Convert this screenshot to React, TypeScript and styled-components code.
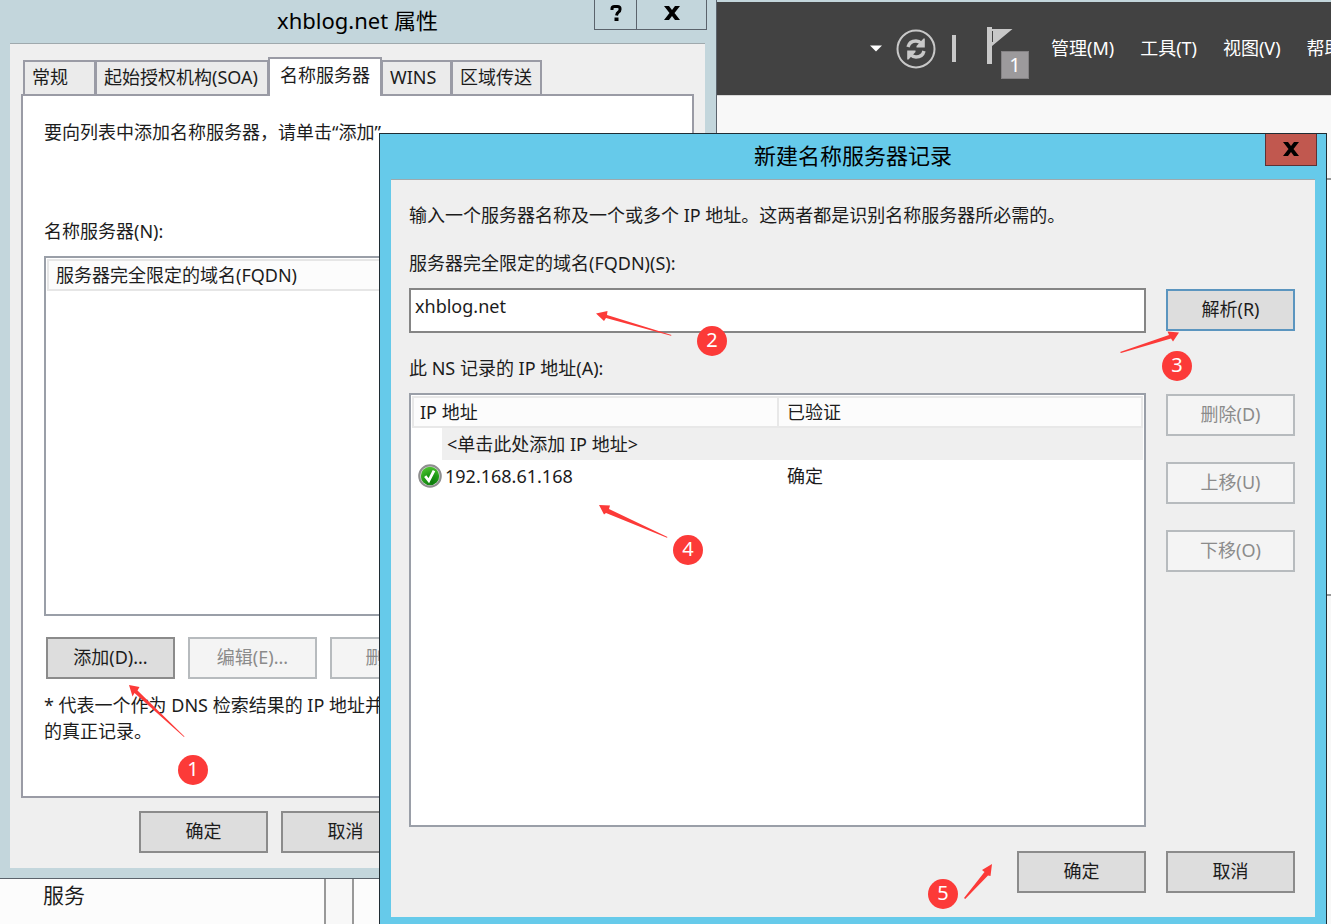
import React from "react";
import styled, { createGlobalStyle, css } from "styled-components";

const GlobalStyle = createGlobalStyle`
  *, *::before, *::after { box-sizing: border-box; }
  body { margin: 0; }
  body, button, input, table {
    font-family: "Noto Sans", "Noto Sans CJK SC", sans-serif;
    font-size: 18px;
    line-height: 26px;
    color: #1c1c1c;
  }
  p { margin: 0; }
`;

const Desktop = styled.div`
  position: relative;
  display: flex;
  flex-direction: column;
  min-height: 100vh;
  overflow: hidden;
  background: #f8f8f8;
`;

/* ---------- Server console behind the dialogs ---------- */

const ConsoleHeader = styled.header`
  display: flex;
  justify-content: flex-end;
  align-items: center;
  height: 95px;
  border-top: 2px solid #c3d6dc;
  background: #424242;
`;

const HeaderTools = styled.div`
  display: flex;
  align-items: center;
  flex: none;
  margin-right: 22px;
`;

const IconButton = styled.button`
  display: block;
  padding: 0;
  border: 0;
  background: none;
  svg { display: block; }
`;

const CaretButton = styled(IconButton)`
  margin-right: 14px;
`;

const FlagButton = styled(IconButton)`
  position: relative;
  margin-top: 8px;
`;

const HeaderDivider = styled.span`
  width: 4px;
  height: 27px;
  margin: 0 31px 0 16px;
  background: #c8c8c8;
`;

const FlagBadge = styled.span`
  position: absolute;
  left: 14px;
  top: 24px;
  width: 28px;
  height: 28px;
  border: 1px solid #848284;
  background: #9c9a9c;
  color: #fff;
  font-size: 20px;
  line-height: 26px;
  text-align: center;
`;

const MenuBar = styled.nav`
  display: flex;
  flex: none;
  gap: 26px;
  width: 280px;
  padding-bottom: 2px;
  overflow: hidden;
`;

const MenuItem = styled.button`
  flex: none;
  padding: 0;
  border: 0;
  background: none;
  color: #fff;
  white-space: nowrap;
`;

const ConsoleBody = styled.div`
  display: flex;
  flex: 1;
  gap: 26px;
  border-top: 1px solid #d8d8d8;
`;

const SideTile = styled.section`
  width: 326px;
  padding: 786px 0 0 43px;
  border-right: 2px solid #999;
  background: #fcfcfc;
  font-size: 21px;
`;

const MiddleTile = styled.section`
  width: 300px;
  border-left: 2px solid #999;
  background: #fcfcfc;
`;

const WideTile = styled.section`
  flex: 1;
  height: 418px;
  margin-top: 82px;
  border: solid #999;
  border-width: 2px 0;
  background: #fff;
`;

/* ---------- Windows ---------- */

const PropertiesWindow = styled.section`
  position: absolute;
  left: 0;
  top: 0;
  width: 717px;
  padding: 0 11px 10px 10px;
  border: solid #5b636c;
  border-width: 0 1px 1px 0;
  background: #c3d6dc;
`;

const RecordWindow = styled.section`
  position: absolute;
  left: 379px;
  right: 4px;
  top: 133px;
  bottom: 0;
  display: flex;
  flex-direction: column;
  padding: 0 11px 7px;
  border: solid #1f2c33;
  border-width: 1px 1px 0;
  background: #66caea;
`;

const TitleBar = styled.header<{ $height: number }>`
  position: relative;
  display: flex;
  align-items: center;
  justify-content: center;
  height: ${(p) => p.$height}px;
  padding-bottom: 3px;
`;

const Title = styled.h1`
  margin: 0;
  font-size: 22px;
  line-height: 30px;
  font-weight: 400;
  color: #000;
`;

const CaptionButtons = styled.div`
  position: absolute;
  right: -2px;
  top: 0;
  display: flex;
`;

const CaptionButton = styled.button<{ $width: number; $danger?: boolean }>`
  display: flex;
  align-items: center;
  justify-content: center;
  width: ${(p) => p.$width}px;
  height: ${(p) => (p.$danger ? 32 : 30)}px;
  padding: 0 0 ${(p) => (p.$danger ? 2 : 4)}px;
  border: 1px solid ${(p) => (p.$danger ? "#5c3236" : "#5b636c")};
  border-top: 0;
  background: ${(p) => (p.$danger ? "#c1584f" : "transparent")};
  & + & { margin-left: -1px; }
`;

const Client = styled.div`
  flex: 1;
  display: flex;
  flex-direction: column;
  border-top: 1px solid #9fa9ad;
  background: #efefef;
`;

const PushButton = styled.button<{ $focused?: boolean }>`
  flex: none;
  width: 129px;
  height: 42px;
  padding: 0 0 2px;
  border: 2px solid ${(p) => (p.$focused ? "#5b95bf" : "#8b8b8b")};
  background: #dddddd;
  &:disabled {
    border-color: #b7bbbe;
    background: #f4f4f4;
    color: #8b8b8b;
  }
`;

const ButtonRow = styled.div<{ $gap: number }>`
  display: flex;
  gap: ${(p) => p.$gap}px;
`;

/* ---------- Properties window ---------- */

const PropertiesClient = styled(Client)`
  padding: 13px 11px 15px;
`;

const TabStrip = styled.div`
  display: flex;
  align-items: flex-end;
  padding-left: 2px;
`;

const Tab = styled.button<{ $width: number; $active?: boolean }>`
  width: ${(p) => p.$width}px;
  height: 34px;
  padding: 0 0 2px 7px;
  border: solid #9a9ba5;
  border-width: 2px 2px 0;
  background: #ebebeb;
  text-align: left;
  white-space: nowrap;
  & + & { margin-left: -1px; }
  ${(p) =>
    p.$active &&
    css`
      position: relative;
      height: 39px;
      margin-bottom: -2px;
      padding: 0 0 6px 10px;
      background: #fff;
    `}
`;

const TabPanel = styled.div`
  height: 704px;
  padding: 23px 20px 0 21px;
  border: 2px solid #9a9ba5;
  background: #fff;
`;

const ServerListLabel = styled.p`
  margin: 73px 0 12px;
`;

const ServerList = styled.table`
  display: block;
  width: 100%;
  height: 360px;
  padding: 1px;
  margin-bottom: 21px;
  border: 2px solid #9a9fa8;
  border-spacing: 0;
  th {
    width: 622px;
    height: 32px;
    padding: 0 0 0 7px;
    border: 2px solid #e6e6e6;
    background: #fcfcfc;
    font-weight: 400;
    text-align: left;
  }
`;

const ServerActions = styled(ButtonRow)`
  padding-left: 2px;
`;

const Note = styled.p`
  margin-top: 13px;
`;

const PropertiesFooter = styled(ButtonRow)`
  margin: 13px 0 0 118px;
`;

/* ---------- New record window ---------- */

const RecordClient = styled(Client)`
  padding: 22px 20px 24px 18px;
`;

const FieldLabel = styled.label<{ $bottom: number }>`
  margin: 22px 0 ${(p) => p.$bottom}px;
`;

const FieldRow = styled.div`
  display: flex;
  gap: 20px;
`;

const NameInput = styled.input`
  flex: 1;
  min-width: 0;
  height: 45px;
  padding: 0 4px 9px;
  border: 2px solid #858585;
  border-radius: 0;
  background: #fff;
  outline: 0;
`;

const SideButtons = styled.div`
  display: flex;
  flex-direction: column;
  gap: 26px;
  padding-top: 1px;
`;

const ListBox = styled.div`
  flex: 1;
  height: 434px;
  padding: 1px;
  border: 2px solid #9a9fa8;
  background: #fff;
`;

const AddressTable = styled.table`
  width: 100%;
  border-spacing: 0;
  table-layout: fixed;
  th, td {
    height: 32px;
    padding: 0 0 0 8px;
    text-align: left;
    font-weight: 400;
  }
  th {
    padding-left: 6px;
    border: 2px solid #e8e8e8;
    background: #fcfcfc;
  }
  th + th { border-left-width: 0; padding-left: 8px; }
  col:first-child { width: 30px; }
  col:nth-child(2) { width: 337px; }
`;

const AddRow = styled.tr`
  td + td { background: #efefef; padding-left: 5px; }
`;

const AddressRow = styled.tr`
  td:first-child { padding-left: 6px; }
  td:nth-child(2) { padding-left: 3px; }
  svg { display: block; }
`;

const RecordFooter = styled(ButtonRow)`
  justify-content: flex-end;
  margin-top: 24px;
`;

/* ---------- Step markers ---------- */

const StepBadge = styled.span<{ $x: number; $y: number }>`
  position: absolute;
  left: ${(p) => p.$x}px;
  top: ${(p) => p.$y}px;
  width: 30px;
  height: 30px;
  border-radius: 50%;
  background: #fc3a38;
  color: #fff;
  font-size: 20px;
  line-height: 28px;
  text-align: center;
`;

const Arrows = styled.svg`
  position: absolute;
  left: 0;
  top: 0;
  pointer-events: none;
`;

const steps = [
  { n: 1, x: 178, y: 755 },
  { n: 2, x: 697, y: 326 },
  { n: 3, x: 1162, y: 351 },
  { n: 4, x: 673, y: 535 },
  { n: 5, x: 928, y: 879 },
];

const arrows = [
  "129,685 139.5,687 137.5,690.5 184.5,736.5 184,737 134.5,693 132.5,696.5",
  "596,313.5 607.5,311 607,315 671.5,335 671,335.8 606,318 604,321",
  "1179,332.5 1167.5,331.5 1169,335 1120,352 1121,353 1171,338.5 1173,341.5",
  "599,505 610,505.5 609,509 667.5,537 667,537.8 606,513 604,514.5",
  "992,864 982,870 984.5,872 964,898 965.2,899 988,875.5 990.5,876",
];

const CloseGlyph = () => (
  <svg width="18" height="14" viewBox="0 0 18 14" aria-hidden="true">
    <path d="M1 0H6L9 4L12 0H17L11.5 7L17 14H12L9 10L6 14H1L6.5 7Z" fill="#000" />
  </svg>
);

const HelpGlyph = () => (
  <svg width="12" height="16" viewBox="0 0 12 16" aria-hidden="true">
    <path
      d="M2 5V3.5Q2 1.5 4.5 1.5H7.5Q10 1.5 10 3.5V4.5Q10 6 8.5 7T6.5 10.5"
      fill="none"
      stroke="#000"
      strokeWidth="3"
    />
    <path d="M4.5 12.5h4v3.5h-4z" fill="#000" />
  </svg>
);

const CycleArrow = () => (
  <>
    <path d="M12 18Q13.5 12 20 12Q23 12 25.5 14.5" fill="none" stroke="#c8c8c8" strokeWidth="3.4" />
    <path d="M28.8 9.5V18.5H20.5V17L27.5 9.5Z" fill="#c8c8c8" />
  </>
);

const RefreshGlyph = () => (
  <svg width="40" height="40" viewBox="0 0 40 40" aria-hidden="true">
    <circle cx="20" cy="20" r="18.5" fill="none" stroke="#c8c8c8" strokeWidth="2" />
    <CycleArrow />
    <g transform="rotate(180 20 20)">
      <CycleArrow />
    </g>
  </svg>
);

const FlagGlyph = () => (
  <svg width="42" height="52" viewBox="0 0 42 52" aria-hidden="true">
    <path d="M0 0H5V2H25.5L5 19V37H0Z" fill="#c8c8c8" />
    <path d="M5.5 4V15" stroke="#424242" strokeWidth="1" />
  </svg>
);

const OkGlyph = () => (
  <svg width="24" height="24" viewBox="0 0 24 24" role="img" aria-label="OK">
    <defs>
      <radialGradient id="okFill" cx="60%" cy="85%" r="85%">
        <stop offset="0" stopColor="#0d7a0c" />
        <stop offset="0.5" stopColor="#1f9a17" />
        <stop offset="1" stopColor="#4cc22f" />
      </radialGradient>
    </defs>
    <circle cx="12" cy="12" r="10.8" fill="#d6d6d6" stroke="#8e8e8e" strokeWidth="2" />
    <circle cx="12" cy="12" r="9.2" fill="url(#okFill)" />
    <path d="M7.2 12.2L10.8 16.6L16 6.6" fill="none" stroke="#fff" strokeWidth="2.8" />
  </svg>
);

export default function App() {
  return (
    <Desktop>
      <GlobalStyle />
      <ConsoleHeader>
        <HeaderTools>
          <CaretButton aria-label="History">
            <svg width="12" height="7" viewBox="0 0 12 7" aria-hidden="true">
              <path d="M0 0.5H12L6 6.5Z" fill="#fff" />
            </svg>
          </CaretButton>
          <IconButton aria-label="Refresh">
            <RefreshGlyph />
          </IconButton>
          <HeaderDivider />
          <FlagButton aria-label="Notifications">
            <FlagGlyph />
            <FlagBadge>1</FlagBadge>
          </FlagButton>
        </HeaderTools>
        <MenuBar>
          <MenuItem>管理(M)</MenuItem>
          <MenuItem>工具(T)</MenuItem>
          <MenuItem>视图(V)</MenuItem>
          <MenuItem>帮助</MenuItem>
        </MenuBar>
      </ConsoleHeader>
      <ConsoleBody>
        <SideTile>服务</SideTile>
        <MiddleTile />
        <WideTile />
      </ConsoleBody>

      <PropertiesWindow>
        <TitleBar $height={43}>
          <Title>xhblog.net 属性</Title>
          <CaptionButtons>
            <CaptionButton $width={43} aria-label="Help">
              <HelpGlyph />
            </CaptionButton>
            <CaptionButton $width={71} aria-label="Close">
              <CloseGlyph />
            </CaptionButton>
          </CaptionButtons>
        </TitleBar>
        <PropertiesClient>
          <TabStrip role="tablist">
            <Tab role="tab" $width={73}>常规</Tab>
            <Tab role="tab" $width={174}>起始授权机构(SOA)</Tab>
            <Tab role="tab" $width={114} $active aria-selected>名称服务器</Tab>
            <Tab role="tab" $width={71}>WINS</Tab>
            <Tab role="tab" $width={91}>区域传送</Tab>
          </TabStrip>
          <TabPanel role="tabpanel">
            <p>要向列表中添加名称服务器，请单击“添加”</p>
            <ServerListLabel>名称服务器(N):</ServerListLabel>
            <ServerList>
              <thead>
                <tr>
                  <th>服务器完全限定的域名(FQDN)</th>
                </tr>
              </thead>
            </ServerList>
            <ServerActions $gap={13}>
              <PushButton>添加(D)...</PushButton>
              <PushButton disabled>编辑(E)...</PushButton>
              <PushButton disabled>删除(R)</PushButton>
            </ServerActions>
            <Note>
              * 代表一个作为 DNS 检索结果的 IP 地址并
              <br />
              的真正记录。
            </Note>
          </TabPanel>
          <PropertiesFooter $gap={13}>
            <PushButton>确定</PushButton>
            <PushButton>取消</PushButton>
          </PropertiesFooter>
        </PropertiesClient>
      </PropertiesWindow>

      <RecordWindow>
        <TitleBar $height={45}>
          <Title>新建名称服务器记录</Title>
          <CaptionButtons>
            <CaptionButton $width={52} $danger aria-label="Close">
              <CloseGlyph />
            </CaptionButton>
          </CaptionButtons>
        </TitleBar>
        <RecordClient>
          <p>输入一个服务器名称及一个或多个 IP 地址。这两者都是识别名称服务器所必需的。</p>
          <FieldLabel htmlFor="fqdn" $bottom={12}>
            服务器完全限定的域名(FQDN)(S):
          </FieldLabel>
          <FieldRow>
            <NameInput id="fqdn" defaultValue="xhblog.net" />
            <SideButtons>
              <PushButton $focused>解析(R)</PushButton>
            </SideButtons>
          </FieldRow>
          <FieldLabel as="p" id="addresses" $bottom={12}>
            此 NS 记录的 IP 地址(A):
          </FieldLabel>
          <FieldRow>
            <ListBox>
              <AddressTable aria-labelledby="addresses">
                <colgroup>
                  <col />
                  <col />
                  <col />
                </colgroup>
                <thead>
                  <tr>
                    <th colSpan={2}>IP 地址</th>
                    <th>已验证</th>
                  </tr>
                </thead>
                <tbody>
                  <AddRow>
                    <td />
                    <td colSpan={2}>&lt;单击此处添加 IP 地址&gt;</td>
                  </AddRow>
                  <AddressRow>
                    <td>
                      <OkGlyph />
                    </td>
                    <td>192.168.61.168</td>
                    <td>确定</td>
                  </AddressRow>
                </tbody>
              </AddressTable>
            </ListBox>
            <SideButtons>
              <PushButton disabled>删除(D)</PushButton>
              <PushButton disabled>上移(U)</PushButton>
              <PushButton disabled>下移(O)</PushButton>
            </SideButtons>
          </FieldRow>
          <RecordFooter $gap={20}>
            <PushButton>确定</PushButton>
            <PushButton>取消</PushButton>
          </RecordFooter>
        </RecordClient>
      </RecordWindow>

      <Arrows width="1331" height="924" aria-hidden="true">
        {arrows.map((points) => (
          <polygon key={points} points={points} fill="#fc3a38" />
        ))}
      </Arrows>
      {steps.map((s) => (
        <StepBadge key={s.n} $x={s.x} $y={s.y}>
          {s.n}
        </StepBadge>
      ))}
    </Desktop>
  );
}
